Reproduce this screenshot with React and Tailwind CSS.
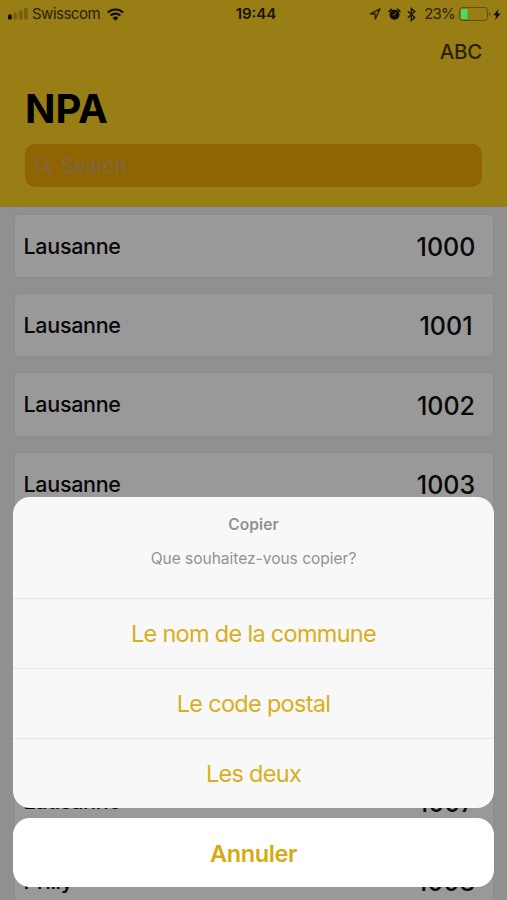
const places = [
  { name: "Lausanne", code: "1000" },
  { name: "Lausanne", code: "1001" },
  { name: "Lausanne", code: "1002" },
  { name: "Lausanne", code: "1003" },
  { name: "Lausanne", code: "1004" },
  { name: "Lausanne", code: "1005" },
  { name: "Lausanne", code: "1006" },
  { name: "Lausanne", code: "1007" },
  { name: "Prilly", code: "1008" },
];

const options = ["Le nom de la commune", "Le code postal", "Les deux"];

const SignalIcon = () => (
  <svg width="20" height="12" viewBox="0 0 20 12" fill="#120e01">
    <rect x="0" y="6.5" width="3.8" height="5" rx="1" />
    <g opacity="0.25">
      <rect x="5.4" y="4.5" width="3.8" height="7" rx="1" />
      <rect x="10.8" y="2.5" width="3.8" height="9" rx="1" />
      <rect x="16" y="0" width="3.8" height="11.5" rx="1" />
    </g>
  </svg>
);

const WifiIcon = () => (
  <svg width="17" height="13" viewBox="0 0 17 13" fill="none" stroke="#120e01">
    <path d="M.8 4.6a11 11 0 0 1 15.4 0" strokeWidth="2.1" />
    <path d="M3.6 7.6a7 7 0 0 1 9.8 0" strokeWidth="2.1" />
    <path d="M8.5 12.8 5.6 9.9a4.2 4.2 0 0 1 5.8 0z" fill="#120e01" stroke="none" />
  </svg>
);

const LocationIcon = () => (
  <svg width="12" height="12" viewBox="0 0 12 12" fill="none" stroke="#2b2204">
    <path d="M11 1 1.2 5.8l4.9.2.2 5z" strokeWidth="1.4" strokeLinejoin="round" />
  </svg>
);

const AlarmIcon = () => (
  <svg width="13" height="13" viewBox="0 0 13 13" fill="none">
    <circle cx="6.5" cy="6.8" r="5" fill="#120e01" />
    <path d="M1.2 3.4 3.4 1.4M11.8 3.4 9.6 1.4" stroke="#120e01" strokeWidth="1.7" strokeLinecap="round" />
    <path d="M7.5 4.2 6.8 7H4.6" stroke="#997e16" strokeWidth="0.7" />
  </svg>
);

const BluetoothIcon = () => (
  <svg width="9" height="15" viewBox="0 0 9 15" fill="none" stroke="#1c1602">
    <path d="m.8 4.2 7 6.2-3.5 3V1.6l3.5 3-7 6.2" strokeWidth="1.4" />
  </svg>
);

const BatteryIcon = () => (
  <svg width="32" height="14" viewBox="0 0 32 14" fill="none">
    <rect x="0.6" y="0.6" width="27.8" height="12.8" rx="2.6" stroke="#5d4c0e" />
    <path d="M3.4 2H8.6v10H3.4A1.4 1.4 0 0 1 2 10.6V3.4A1.4 1.4 0 0 1 3.4 2z" fill="#45df60" />
    <path d="M30 5v4q1.4-.6 1.4-2T30 5z" fill="#5d4c0e" />
  </svg>
);

const BoltIcon = () => (
  <svg width="8" height="11" viewBox="0 0 8 11" fill="#120e01">
    <path d="M5.6 0 .2 6.3h3L2.1 11 7.8 4.5H4.6z" />
  </svg>
);

const SearchIcon = () => (
  <svg width="19" height="19" viewBox="0 0 19 19" fill="none" stroke="#7c6947">
    <circle cx="7.3" cy="7.3" r="6.1" strokeWidth="1.5" />
    <path d="m11.8 11.8 5.8 5.4" strokeWidth="2.4" />
  </svg>
);

const StatusBar = () => (
  <div className="relative flex h-[28px] items-center pl-2 pr-[6px] text-[15px] text-[#2b2204]">
    <SignalIcon />
    <span className="ml-1 tracking-[-0.5px]">Swisscom</span>
    <span className="ml-[7px]">
      <WifiIcon />
    </span>
    <span className="absolute left-1/2 -translate-x-1/2 pl-[5px] font-semibold text-[#181301]">
      19:44
    </span>
    <div className="ml-auto flex items-center">
      <LocationIcon />
      <span className="ml-[7px]">
        <AlarmIcon />
      </span>
      <span className="ml-[6px]">
        <BluetoothIcon />
      </span>
      <span className="ml-2 tracking-[-0.8px]">23%</span>
      <span className="ml-1">
        <BatteryIcon />
      </span>
      <span className="ml-0.5">
        <BoltIcon />
      </span>
    </div>
  </div>
);

const PlaceCard = ({ place }) => (
  <li className="flex h-[62.4px] shrink-0 items-center justify-between rounded-[3px] bg-[#999] pl-[9px] pr-[14.5px] text-[#080808] shadow-[0_0_2px_rgba(0,0,0,0.1)]">
    <span className="text-[21.5px] font-[450] tracking-[-0.3px]">{place.name}</span>
    <span className="w-[64px] pt-1 text-center text-[25px] font-[450]">{place.code}</span>
  </li>
);

const ActionSheet = () => (
  <div className="absolute inset-x-[13px] bottom-[13px] text-center">
    <div className="h-[311px] overflow-hidden rounded-[17px] bg-[#f8f8f8]">
      <div className="flex h-[101px] flex-col items-center pt-[18px] text-[#929292]">
        <h2 className="text-[15.5px] font-semibold leading-5 tracking-[0.1px]">Copier</h2>
        <p className="mt-[14px] text-[15.5px] leading-5">Que souhaitez-vous copier?</p>
      </div>
      {options.map((option) => (
        <button
          key={option}
          className="block h-[70px] w-full border-t border-[#e7e7e7] pt-px text-[23.5px] tracking-[-0.7px] text-[#d8af20]"
        >
          {option}
        </button>
      ))}
    </div>
    <button className="mt-[10px] block h-[69px] w-full rounded-[17px] bg-white pt-0.5 text-[23.5px] font-semibold tracking-[-0.4px] text-[#d6aa10]">
      Annuler
    </button>
  </div>
);

const App = () => {
  return (
    <div className="relative h-[900px] w-full overflow-hidden bg-[#909090] font-['Inter',sans-serif]">
      <header className="h-[207px] border-b border-[#8a7a3c] bg-[#997e16]">
        <StatusBar />
        <div className="flex h-[49px] items-center justify-end pr-[25px] text-[20.5px] font-medium tracking-[-0.3px] text-[#2b2204]">
          ABC
        </div>
        <h1 className="h-[67px] pl-[25px] pt-2 text-[40px] font-bold leading-[48px] text-black">NPA</h1>
        <div className="mx-[25px] flex h-[43px] items-center rounded-[10px] bg-[#906400] pl-[9px] text-[20.5px] text-[#7c6947]">
          <SearchIcon />
          <span className="ml-2 pt-0.5 tracking-[-0.4px]">Search</span>
        </div>
      </header>
      <ul className="flex flex-col gap-[17px] px-[14.5px] pt-[7.5px]">
        {places.map((place) => (
          <PlaceCard key={place.code} place={place} />
        ))}
      </ul>
      <ActionSheet />
    </div>
  );
};

export default App;
